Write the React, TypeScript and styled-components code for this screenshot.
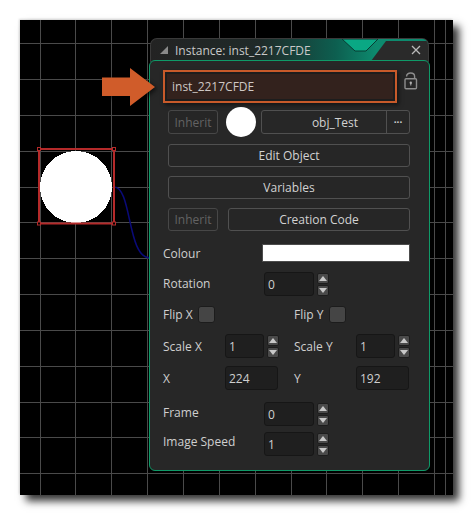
import React from "react";
import styled, { createGlobalStyle } from "styled-components";

const Global = createGlobalStyle`
  html, body { margin: 0; padding: 0; background: #fff; }
  body { font-family: "Open Sans", "Noto Sans", sans-serif; }
`;

const Page = styled.div`
  width: 473px;
  height: 515px;
  padding: 20px;
  box-sizing: border-box;
`;

const Canvas = styled.div`
  position: relative;
  width: 433px;
  height: 475px;
  background: #000;
  box-shadow: 6px 6px 8px rgba(0, 0, 0, 0.8), -1px -1px 2px rgba(0, 0, 0, 0.15);
  overflow: hidden;
`;

const Drawing = styled.svg`
  position: absolute;
  inset: 0;
`;

const Arrow = styled.svg`
  position: absolute;
  left: 82px;
  top: 48px;
  filter: drop-shadow(2px 2px 2px rgba(0, 0, 0, 0.6));
  z-index: 3;
`;

const Window = styled.div`
  position: absolute;
  left: 129px;
  top: 18px;
  width: 281px;
`;

const TitleBar = styled.div`
  position: relative;
  height: 24px;
  margin: 0 1px -2px 1px;
  padding: 0 0 1px 9px;
  box-sizing: border-box;
  display: flex;
  align-items: center;
  gap: 7px;
  border-radius: 7px 7px 0 0;
  border: 1px solid #3a3a3a;
  border-bottom: 0;
  background: linear-gradient(90deg, #232323 0px, #1f2a29 110px, #0d5f50 185px, #0d8a6e 225px);
  color: #c9c9c9;
  font-size: 12px;
  overflow: hidden;
`;

const TitleArt = styled.svg`
  position: absolute;
  right: 0;
  top: 0;
`;

const TitleText = styled.span`
  position: relative;
`;

const Close = styled.svg`
  position: absolute;
  right: 7px;
  top: 6px;
`;

const Body = styled.div`
  position: relative;
  height: 411px;
  box-sizing: border-box;
  border: 1px solid #0f9a68;
  border-radius: 6px;
  background: #272727;
  padding: 12px 0 0 13px;
  display: flex;
  flex-direction: column;
  color: #cfcfcf;
  font-size: 12px;
`;

const NameBox = styled.div`
  width: 234px;
  height: 33px;
  flex: none;
  box-sizing: border-box;
  border: 2px solid #c85a2a;
  background: #1d1d1d;
  padding: 2px;
  margin-top: -3px;
  box-shadow: 2px 2px 4px rgba(0, 0, 0, 0.5);
`;

const NameInner = styled.div`
  height: 100%;
  box-sizing: border-box;
  background: #33221d;
  padding-left: 5px;
  display: flex;
  align-items: center;
  color: #cfc8c4;
`;

const TopRow = styled.div`
  display: flex;
  align-items: flex-start;
  gap: 7px;
`;

const LockIcon = styled.svg`
  flex: none;
  margin-top: -1px;
`;

const Btn = styled.div<{ $w?: number; $dim?: boolean }>`
  ${(p) => (p.$w ? `width:${p.$w}px;flex:none;` : "flex:1;")}
  height: 100%;
  box-sizing: border-box;
  border: 1px solid ${(p) => (p.$dim ? "#474747" : "#505050")};
  border-radius: 3px;
  background: #262626;
  color: ${(p) => (p.$dim ? "#636363" : "#d2d2d2")};
  display: flex;
  align-items: center;
  justify-content: center;
`;

const BtnRow = styled.div<{ $gap: number; $top: number; $h: number }>`
  display: flex;
  align-items: center;
  gap: ${(p) => p.$gap}px;
  height: ${(p) => p.$h}px;
  margin-top: ${(p) => p.$top}px;
  margin-left: 5px;
  width: 242px;
`;

const Circle = styled.div`
  width: 30px;
  height: 30px;
  flex: none;
  margin: -3px 0;
  border-radius: 50%;
  background: #fff;
`;

const Joined = styled.div`
  flex: 1;
  display: flex;
  height: 24px;
  box-sizing: border-box;
  border: 1px solid #505050;
  border-radius: 3px;
  color: #d2d2d2;
  margin-left: -3px;
`;

const JoinedMain = styled.div`
  flex: 1;
  display: flex;
  align-items: center;
  justify-content: center;
  padding-left: 22px;
`;

const JoinedEnd = styled.div`
  width: 22px;
  border-left: 1px solid #505050;
  display: flex;
  align-items: center;
  justify-content: center;
  font-size: 10px;
  font-weight: 700;
  line-height: 1;
`;

const Row = styled.div<{ $top: number }>`
  display: flex;
  align-items: center;
  margin-top: ${(p) => p.$top}px;
  height: 24px;
`;

const Label = styled.div<{ $w: number; $up?: number }>`
  width: ${(p) => p.$w}px;
  flex: none;
  margin-bottom: ${(p) => p.$up ?? 0}px;
`;

const Swatch = styled.div`
  width: 148px;
  height: 18px;
  box-sizing: border-box;
  background: #fff;
  border: 1px solid #4c4c4c;
`;

const Input = styled.div<{ $w: number }>`
  width: ${(p) => p.$w}px;
  height: 24px;
  box-sizing: border-box;
  background: #1f1f1f;
  border: 1px solid #161616;
  border-radius: 3px;
  padding-left: 3px;
  display: flex;
  align-items: center;
  color: #cfcfcf;
  flex: none;
`;

const SpinWrap = styled.div`
  display: flex;
  flex-direction: column;
  gap: 1px;
  margin-left: 3px;
  flex: none;
`;

const SpinBtn = styled.div`
  width: 12px;
  height: 11px;
  background: #4a4a4a;
  border: 1px solid #1d1d1d;
  border-radius: 2px;
  box-sizing: border-box;
  display: flex;
  align-items: center;
  justify-content: center;
`;

const Check = styled.div`
  width: 17px;
  height: 17px;
  box-sizing: border-box;
  background: #454545;
  border: 1px solid #1c1c1c;
  border-radius: 3px;
`;

const Half = styled.div`
  display: flex;
  align-items: center;
  width: 131px;
  flex: none;
`;

const Spinner = () => (
  <SpinWrap>
    <SpinBtn>
      <svg width="8" height="5" viewBox="0 0 8 5"><path d="M4 0 8 5H0Z" fill="#c8c8c8" /></svg>
    </SpinBtn>
    <SpinBtn>
      <svg width="8" height="5" viewBox="0 0 8 5"><path d="M0 0H8L4 5Z" fill="#c8c8c8" /></svg>
    </SpinBtn>
  </SpinWrap>
);

const vLines = [20.5, 55.5, 91.5, 127.5, 163.5, 199.5, 235.5, 271.5, 306.5, 342.5, 378.5, 414.5, 425.5];
const hLines = [23.5, 59.5, 95.5, 131.5, 167.5, 202.5, 238.5, 274.5, 310.5, 346.5, 382.5, 417.5, 453.5];

export default function App() {
  return (
    <Page>
      <Global />
      <Canvas>
        <Drawing width="433" height="475" viewBox="0 0 433 475">
          {vLines.map((x) => (
            <line key={x} x1={x} x2={x} y1={0} y2={475} stroke="#4a4a4a" />
          ))}
          {hLines.map((y) => (
            <line key={y} y1={y} y2={y} x1={0} x2={433} stroke="#4a4a4a" />
          ))}
          <path d="M94 167C112 167 107 238 130 238" fill="none" stroke="#0a0a78" strokeWidth="1.5" />
          <circle cx="56" cy="167" r="36" fill="#fff" shapeRendering="crispEdges" />
          <rect x="19" y="129" width="75" height="74.5" fill="none" stroke="#b52a2a" strokeWidth="2" />
          {[[19, 129], [94, 129], [19, 203.5], [94, 203.5]].map(([x, y]) => (
            <rect key={`${x}-${y}`} x={x - 1.5} y={y - 1.5} width="3" height="3" fill="#000" stroke="#b52a2a" />
          ))}
        </Drawing>
        <Window>
          <TitleBar>
            <TitleArt width="120" height="24" viewBox="0 0 120 24">
              <path d="M63 22 78 2H120V24H60Z" fill="#2a2a2a" />
              <path d="M78 0H120V2H78Z" fill="#0d8a6e" />
              <path d="M34 0 47 12H58L70 0Z" fill="#0aa884" stroke="#083c33" strokeWidth="1" />
            </TitleArt>
            <svg width="8" height="8" viewBox="0 0 8 8" style={{ position: "relative" }}>
              <path d="M8 0V8H0Z" fill="#8a8a8a" />
            </svg>
            <TitleText>Instance: inst_2217CFDE</TitleText>
            <Close width="10" height="10" viewBox="0 0 10 10">
              <path d="M1 1 9 9M9 1 1 9" stroke="#b9b9b9" strokeWidth="1.3" />
            </Close>
          </TitleBar>
          <Body>
            <TopRow>
              <NameBox>
                <NameInner>inst_2217CFDE</NameInner>
              </NameBox>
              <LockIcon width="14" height="18" viewBox="0 0 14 18">
                <path d="M2.6 4.4C2.6 2.2 4.4 1 6.6 1S10.6 2.2 10.6 4.4V6.5" fill="none" stroke="#8d8d8d" strokeWidth="1.4" />
                <rect x="1" y="6.8" width="11.5" height="10" rx="1" fill="none" stroke="#8d8d8d" strokeWidth="1.4" />
                <circle cx="6.8" cy="10.8" r="1.2" fill="#b0b0b0" />
                <rect x="6.3" y="11" width="1" height="2.5" fill="#b0b0b0" />
              </LockIcon>
            </TopRow>
            <BtnRow $gap={8} $top={7} $h={24}>
              <Btn $w={50} $dim>Inherit</Btn>
              <Circle />
              <Joined>
                <JoinedMain>obj_Test</JoinedMain>
                <JoinedEnd>···</JoinedEnd>
              </Joined>
            </BtnRow>
            <BtnRow $gap={0} $top={10} $h={23}>
              <Btn>Edit Object</Btn>
            </BtnRow>
            <BtnRow $gap={0} $top={9} $h={23}>
              <Btn>Variables</Btn>
            </BtnRow>
            <BtnRow $gap={10} $top={9} $h={23}>
              <Btn $w={50} $dim>Inherit</Btn>
              <Btn>Creation Code</Btn>
            </BtnRow>
            <Row $top={10}>
              <Label $w={99}>Colour</Label>
              <Swatch />
            </Row>
            <Row $top={7}>
              <Label $w={101} $up={2}>Rotation</Label>
              <Input $w={50}>0</Input>
              <Spinner />
            </Row>
            <Row $top={6}>
              <Half>
                <Label $w={35}>Flip X</Label>
                <Check />
              </Half>
              <Label $w={35}>Flip Y</Label>
              <Check />
            </Row>
            <Row $top={8}>
              <Half>
                <Label $w={62}>Scale X</Label>
                <Input $w={39}>1</Input>
                <Spinner />
              </Half>
              <Label $w={62}>Scale Y</Label>
              <Input $w={39}>1</Input>
              <Spinner />
            </Row>
            <Row $top={8}>
              <Half>
                <Label $w={62}>X</Label>
                <Input $w={53}>224</Input>
              </Half>
              <Label $w={62}>Y</Label>
              <Input $w={53}>192</Input>
            </Row>
            <Row $top={12}>
              <Label $w={101} $up={4}>Frame</Label>
              <Input $w={50}>0</Input>
              <Spinner />
            </Row>
            <Row $top={6}>
              <Label $w={101} $up={5}>Image Speed</Label>
              <Input $w={50}>1</Input>
              <Spinner />
            </Row>
          </Body>
        </Window>
        <Arrow width="54" height="38" viewBox="0 0 54 38">
          <path d="M0 9.5H28V0L53 19 28 38V28H0Z" fill="#d05c2a" />
        </Arrow>
      </Canvas>
    </Page>
  );
}
